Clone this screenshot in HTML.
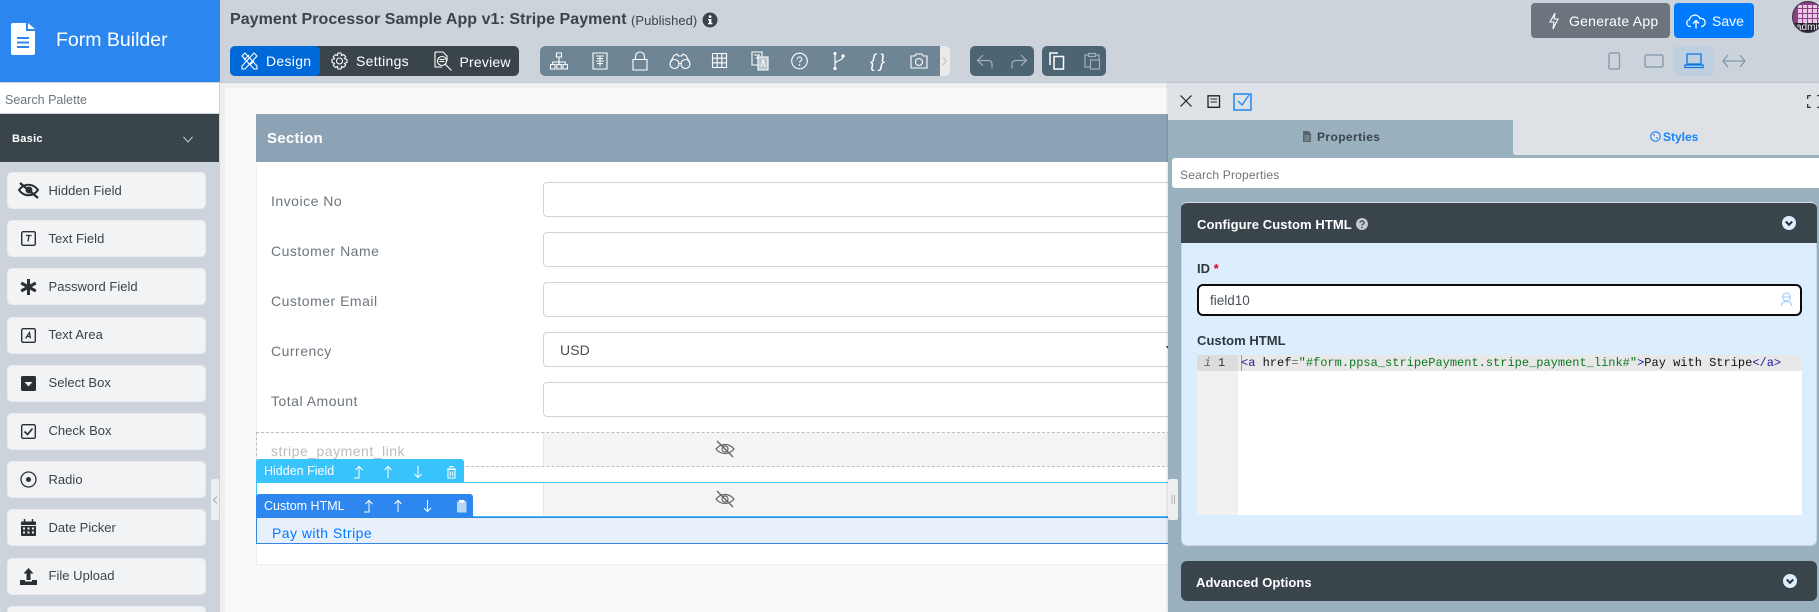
<!DOCTYPE html>
<html lang="en"><head><meta charset="utf-8"><title>Form Builder</title>
<style>
html,body{margin:0;padding:0;width:1819px;height:612px;overflow:hidden;background:#f8f9fb;font-family:"Liberation Sans",sans-serif}
div,span,svg{position:absolute;box-sizing:border-box}
#root{left:0;top:0;width:1819px;height:612px;overflow:hidden}
.t{white-space:nowrap;line-height:20px;height:20px}
svg{overflow:visible;fill:none}
.it{left:7px;width:199px;height:37px;background:#f2f3f5;border:1px solid #e9ebee;border-radius:5px}
.il{left:48.500px;font-size:13px;color:#3a444b;letter-spacing:.02px}
.lb{left:271px;font-size:14px;color:#6c757d;letter-spacing:.5px}
.inp{left:543px;width:640px;height:35px;background:#fff;border:1px solid #ced4da;border-radius:4px}
.w{stroke:#fff;stroke-width:1.1}
.c{font-family:"Liberation Mono",monospace;font-size:12px;line-height:16px;height:16px;white-space:pre}
</style></head><body><div id="root">

<!-- top bar -->
<div style="left:0;top:0;width:1819px;height:83px;background:#ccd3db;border-bottom:1px solid #c4cbd2"></div>
<div style="left:0;top:0;width:220px;height:82px;background:#2b86ef"></div>
<svg style="left:11px;top:23px" width="24" height="32" viewBox="0 0 24 32"><path d="M2 0H15V8H24V30a2 2 0 0 1-2 2H2a2 2 0 0 1-2-2V2a2 2 0 0 1 2-2Z" fill="#fff"/><path d="M17 0l7 6h-7Z" fill="#fff"/><path d="M6 15h12M6 19.500h12M6 24h12" stroke="#2b86ef" stroke-width="2"/></svg>
<div class="t" style="left:56px;top:30px;font-size:19.500px;color:#fff;line-height:20px">Form Builder</div>

<div class="t" style="left:230px;top:10px;font-size:16px;font-weight:bold;color:#3a444b;letter-spacing:.05px">Payment Processor Sample App v1: Stripe Payment</div>
<div class="t" style="left:631px;top:11px;font-size:13px;color:#3a444b;letter-spacing:.05px">(Published)</div>
<svg style="left:702px;top:12px" width="16" height="16" viewBox="0 0 16 16"><circle cx="8" cy="8" r="7.500" fill="#3a444b"/><rect x="7" y="7" width="2.400" height="5" fill="#fff"/><rect x="6" y="11" width="4.400" height="1.300" fill="#fff"/><rect x="6" y="7" width="3" height="1.200" fill="#fff"/><circle cx="8.100" cy="4.600" r="1.400" fill="#fff"/></svg>

<!-- design tabs -->
<div style="left:230px;top:46px;width:289px;height:30px;background:#3a444b;border-radius:5px"></div>
<div style="left:230px;top:46px;width:90px;height:30px;background:#0069d9;border-radius:5px"></div>
<svg style="left:241px;top:52px" width="17" height="18" viewBox="0 0 17 18"><path class="w" d="M1 4l3-3 12 13v3h-3ZM13 1l3 3L4 17H1v-3ZM3 8L8 3M9 13l4-4"/></svg>
<div class="t" style="left:266px;top:51px;font-size:14px;color:#fff;letter-spacing:.3px">Design</div>
<svg style="left:331px;top:52px" width="17" height="18" viewBox="0 0 17 18"><circle class="w" cx="8.500" cy="9" r="3"/><path class="w" d="M7 1h3l.5 2.500 2-1 2.200 2.200-1.200 2 2.500.800v3l-2.500.800 1.200 2-2.200 2.200-2-1L10 17H7l-.5-2.500-2 1-2.200-2.200 1.200-2L1 10.500v-3l2.500-.800-1.200-2 2.200-2.200 2 1Z"/></svg>
<div class="t" style="left:356px;top:51px;font-size:14px;color:#fff;letter-spacing:.3px">Settings</div>
<svg style="left:434px;top:51px" width="20" height="21" viewBox="0 0 20 21"><path class="w" d="M1 1h8l4 4v5M1 1v15h7"/><circle class="w" cx="8" cy="10" r="4.500"/><path class="w" d="M5.500 8.500h5M5.500 10.500h5M11.500 13.500l6 6"/></svg>
<div class="t" style="left:459.500px;top:52px;font-size:14px;color:#fff;letter-spacing:.2px">Preview</div>

<!-- tool group -->
<div style="left:540px;top:46px;width:410px;height:30px;background:#eaeaea;border-radius:5px"></div>
<div style="left:540px;top:46px;width:400px;height:30px;background:#6e8596;border-radius:5px 0 0 5px"></div>
<svg style="left:941px;top:56px" width="8" height="10" viewBox="0 0 8 10"><path d="M2 1l3 4-3 4" stroke="#bbb"/></svg>
<svg style="left:550px;top:52px" width="18" height="18" viewBox="0 0 18 18"><path class="w" d="M6.500 1h5v4h-5ZM.500 12.500h4.500v4.500H.5ZM6.800 12.500h4.500v4.500H6.800ZM13 12.500h4.500v4.500H13ZM9 5v5M2.700 12.500V10h12.500v2.500M9 10v2.500"/></svg>
<svg style="left:592px;top:52px" width="16" height="18" viewBox="0 0 16 18"><path class="w" d="M1 1h14v16H1Z"/><path d="M4 4h8M5 6.500h6M4 9h8M5 11.500h6M8 3.500v11" stroke="#fff"/></svg>
<svg style="left:632px;top:51px" width="16" height="20" viewBox="0 0 16 20"><path class="w" d="M1 8.500h14V19H1ZM3.500 8.500V5.500a4.500 4.500 0 0 1 9 0v3"/></svg>
<svg style="left:669px;top:53px" width="22" height="17" viewBox="0 0 22 17"><circle class="w" cx="5.500" cy="11" r="4.500"/><circle class="w" cx="16.500" cy="11" r="4.500"/><path class="w" d="M1.500 9L5 2.500 8 1l1 2M20.500 9L17 2.500 14 1l-1 2M9.500 10.500h3M9 3h4"/></svg>
<svg style="left:712px;top:53px" width="15" height="15" viewBox="0 0 15 15"><path class="w" d="M.5.500h14v14H.5ZM5.200.5v14M9.800.5v14M.5 5.200h14M.5 9.800h14"/></svg>
<svg style="left:751px;top:51px" width="18" height="20" viewBox="0 0 18 20"><path class="w" d="M1 1h10v13H1Z" fill="#6e8596"/><path class="w" d="M7 6h10v13H7Z" fill="#b9c6cf"/><path d="M3 4h6M5 8l3-4" stroke="#fff"/><path d="M10 16l2-7 2 7" stroke="#fff"/></svg>
<svg style="left:791px;top:52px" width="17" height="18" viewBox="0 0 17 18"><circle class="w" cx="8.500" cy="9" r="7.800"/><path d="M6.300 7.300c0-3 4.500-3 4.500-.1 0 1.700-2.300 1.800-2.300 3.500" stroke="#fff"/><circle cx="8.500" cy="13" r=".9" fill="#fff"/></svg>
<svg style="left:832px;top:51px" width="14" height="20" viewBox="0 0 14 20"><path class="w" d="M3 3.500v13M11 6c0 4-8 3-8 7"/><circle cx="3" cy="2.500" r="1.600" fill="#fff"/><circle cx="3" cy="17.500" r="1.600" fill="#fff"/><circle cx="11" cy="5" r="1.600" fill="#fff"/></svg>
<div class="t" style="left:870px;top:50px;font-size:18px;line-height:22px;height:22px;color:#fff;font-style:italic;letter-spacing:3px">{}</div>
<svg style="left:910px;top:53px" width="18" height="16" viewBox="0 0 18 16"><path class="w" d="M1 3h4l1-2h6l1 2h4v12H1Z"/><circle class="w" cx="9" cy="9" r="3.500" stroke-width="1.500"/></svg>

<!-- undo/copy -->
<div style="left:970px;top:46px;width:64px;height:30px;background:#4c6474;border-radius:5px"></div>
<div style="left:1042px;top:46px;width:64px;height:30px;background:#4c6474;border-radius:5px"></div>
<svg style="left:976px;top:54px" width="18" height="15" viewBox="0 0 18 15"><path d="M7 1L1.500 6.500 7 11.500M1.500 6.500H12c3 0 4 2 4 4v4" stroke="#9fb0bc" stroke-width="1.200"/></svg>
<svg style="left:1010px;top:54px" width="18" height="15" viewBox="0 0 18 15"><path d="M11 1l5.500 5.500L11 11.500M16.500 6.500H6c-3 0-4 2-4 4v4" stroke="#9fb0bc" stroke-width="1.200"/></svg>
<svg style="left:1049px;top:52px" width="16" height="18" viewBox="0 0 16 18"><path d="M1 13V1h8M5 4.500h9.500V17H5Z" stroke="#fff" stroke-width="1.500"/></svg>
<svg style="left:1084px;top:52px" width="16" height="18" viewBox="0 0 16 18"><path d="M5 3H1v12h5M11 3h4v5M4.500 1.500h7v3h-7ZM6.500 8h9v9h-9Z" stroke="#9fb0bc" stroke-width="1.200"/></svg>

<!-- right top -->
<div style="left:1531px;top:3px;width:139px;height:35px;background:#6c757d;border-radius:4px"></div>
<svg style="left:1548px;top:12px" width="12" height="18" viewBox="0 0 12 18"><path d="M7 1L2 10h4l-1 7 5-10H6Z" stroke="#fff" stroke-width="1.100"/></svg>
<div class="t" style="left:1569px;top:11px;font-size:14px;color:#fff;letter-spacing:.25px">Generate App</div>
<div style="left:1674px;top:3px;width:80px;height:35px;background:#007bff;border-radius:4px"></div>
<svg style="left:1686px;top:14px" width="20" height="15" viewBox="0 0 20 15"><path d="M5 12.500H4A3.500 3.500 0 0 1 3.500 5.600 5.500 5.500 0 0 1 14 4.500a4 4 0 0 1 2 8h-1M10 14.500V7M7 9.500L10 6.500 13 9.500" stroke="#fff" stroke-width="1.300"/></svg>
<div class="t" style="left:1712px;top:11px;font-size:14px;color:#fff">Save</div>
<div style="left:1792px;top:1px;width:32px;height:32px;border-radius:50%;background:#8a3f85;overflow:hidden;border:1px solid #3a3340">
  <div style="left:5px;top:3px;width:24px;height:18px;background:repeating-linear-gradient(90deg,transparent 0 4px,#8a3f85 4px 5px),repeating-linear-gradient(0deg,#e9c9e6 0 4px,#8a3f85 4px 5px)"></div>
  <div style="left:0;top:21px;width:32px;height:11px;background:#2a2230"></div>
  <div class="t" style="left:3px;top:16px;font-size:10px;color:#eee">admin</div>
</div>
<div style="left:1674px;top:46px;width:40px;height:30px;background:#c0cfdf;border-radius:3px"></div>
<svg style="left:1607px;top:52px" width="14" height="18" viewBox="0 0 14 18"><rect x="2" y="1" width="10.500" height="16" rx="1.500" stroke="#7f97a8" stroke-width="1.300"/></svg>
<svg style="left:1644px;top:53px" width="20" height="16" viewBox="0 0 20 16"><rect x="1" y="2" width="18" height="12" rx="1.500" stroke="#7f97a8" stroke-width="1.300"/></svg>
<svg style="left:1684px;top:53px" width="20" height="16" viewBox="0 0 20 16"><path d="M3 1h14v10H3ZM1 12h18v2.500H1Z" stroke="#0a76e8" stroke-width="1.300"/></svg>
<svg style="left:1722px;top:54px" width="24" height="14" viewBox="0 0 24 14"><path d="M6 1L1 7l5 6M18 1l5 6-5 6M1 7h22" stroke="#7f97a8" stroke-width="1.200"/></svg>

<!-- sidebar -->
<div style="left:0;top:82px;width:220px;height:530px;background:#ccd3db"></div>
<div style="left:0;top:83px;width:219px;height:30px;background:#fff"></div>
<div class="t" style="left:5px;top:90px;font-size:12.500px;color:#6c757d">Search Palette</div>
<div style="left:0;top:114px;width:219px;height:48px;background:#3a444b"></div>
<div class="t" style="left:12px;top:129px;font-size:11px;font-weight:bold;color:#fff;letter-spacing:.3px">Basic</div>
<svg style="left:183px;top:136px" width="10" height="7" viewBox="0 0 10 7"><path d="M.5 1L5 6 9.500 1" stroke="#c5ccd2"/></svg>

<div class="it" style="top:172px"></div><div class="t il" style="top:181px">Hidden Field</div>
<svg style="left:18px;top:182px" width="22" height="17" viewBox="0 0 22 17"><path d="M1 8c5-7 14-7 19 0-5 7-14 7-19 0Z" stroke="#2b2f33" stroke-width="2"/><circle cx="11" cy="8" r="3.500" fill="#2b2f33"/><path d="M2 1l18 15" stroke="#2b2f33" stroke-width="2.400"/></svg>
<div class="it" style="top:220px"></div><div class="t il" style="top:229px">Text Field</div>
<svg style="left:21px;top:231px" width="15" height="15" viewBox="0 0 15 15"><rect x=".7" y=".7" width="13.600" height="13.600" rx="1.500" stroke="#2b2f33" stroke-width="1.400"/><path d="M5 4.500h5.500M8 4.500l-1 6" stroke="#2b2f33" stroke-width="1.300"/></svg>
<div class="it" style="top:268px"></div><div class="t il" style="top:277px">Password Field</div>
<svg style="left:20px;top:278px" width="17" height="18" viewBox="0 0 17 18"><path d="M8.500 1v16M1.200 5l14.600 8M15.800 5L1.200 13" stroke="#2b2f33" stroke-width="3"/></svg>
<div class="it" style="top:317px"></div><div class="t il" style="top:325px">Text Area</div>
<svg style="left:21px;top:328px" width="15" height="15" viewBox="0 0 15 15"><rect x=".7" y=".7" width="13.600" height="13.600" rx="1.500" stroke="#2b2f33" stroke-width="1.400"/><path d="M4.500 10.500L8.500 4.500 9.500 10.500M6 8.500h3.500" stroke="#2b2f33" stroke-width="1.200"/></svg>
<div class="it" style="top:365px"></div><div class="t il" style="top:373px">Select Box</div>
<svg style="left:21px;top:376px" width="15" height="15" viewBox="0 0 15 15"><rect width="15" height="15" rx="1.500" fill="#2b2f33"/><path d="M3.500 6h8l-4 4.500Z" fill="#f2f3f5"/></svg>
<div class="it" style="top:413px"></div><div class="t il" style="top:421px">Check Box</div>
<svg style="left:21px;top:424px" width="15" height="15" viewBox="0 0 15 15"><rect x=".7" y=".7" width="13.600" height="13.600" rx="1.500" stroke="#2b2f33" stroke-width="1.400"/><path d="M3.500 7.500l3 3 5-6" stroke="#2b2f33" stroke-width="1.700"/></svg>
<div class="it" style="top:461px"></div><div class="t il" style="top:470px">Radio</div>
<svg style="left:20px;top:471px" width="17" height="17" viewBox="0 0 17 17"><circle cx="8.500" cy="8.500" r="7.500" stroke="#2b2f33" stroke-width="1.300"/><circle cx="8.500" cy="8.500" r="2.500" fill="#2b2f33"/></svg>
<div class="it" style="top:509px"></div><div class="t il" style="top:518px">Date Picker</div>
<svg style="left:21px;top:519px" width="15" height="17" viewBox="0 0 15 17"><path d="M0 3.500a1 1 0 0 1 1-1h13a1 1 0 0 1 1 1V6H0ZM0 7h15v9a1 1 0 0 1-1 1H1a1 1 0 0 1-1-1Z" fill="#2b2f33"/><path d="M3.500 0v3M11.500 0v3" stroke="#2b2f33" stroke-width="1.500"/><path d="M2 9.500h2M6.500 9.500h2M11 9.500h2M2 13.500h2M6.500 13.500h2M11 13.500h2" stroke="#f2f3f5" stroke-width="2"/></svg>
<div class="it" style="top:558px"></div><div class="t il" style="top:566px">File Upload</div>
<svg style="left:20px;top:568px" width="17" height="17" viewBox="0 0 17 17"><path d="M8.500 0l5 5.500h-3V12h-4V5.500h-3Z" fill="#2b2f33"/><path d="M0 12h5v1.500h7V12h5v5H0Z" fill="#2b2f33"/></svg>
<div class="it" style="top:606px;height:6px;border-bottom:0;border-radius:5px 5px 0 0"></div>

<div style="left:211px;top:479px;width:8px;height:41px;background:#eceeef;border-radius:2px"></div>
<svg style="left:212px;top:496px" width="6" height="8" viewBox="0 0 6 8"><path d="M5 .5L1.500 4 5 7.500" stroke="#aaa"/></svg>

<!-- main -->
<div style="left:220px;top:83px;width:950px;height:529px;background:#efefef"></div>
<div style="left:225px;top:88px;width:945px;height:524px;background:#f8f9fb"></div>
<div style="left:256px;top:114px;width:914px;height:451px;background:#fff;border:1px solid #eef0f2"></div>
<div style="left:256px;top:114px;width:914px;height:48px;background:#8ca3b6"></div>
<div class="t" style="left:267px;top:129px;font-size:15px;font-weight:bold;color:#fff;letter-spacing:.25px">Section</div>

<div class="t lb" style="top:191px">Invoice No</div><div class="inp" style="top:182px"></div>
<div class="t lb" style="top:241px">Customer Name</div><div class="inp" style="top:232px"></div>
<div class="t lb" style="top:291px">Customer Email</div><div class="inp" style="top:282px"></div>
<div class="t lb" style="top:341px">Currency</div><div class="inp" style="top:332px"></div>
<div class="t" style="left:560px;top:340px;font-size:14px;color:#495057;letter-spacing:.1px">USD</div>
<div class="t lb" style="top:391px">Total Amount</div><div class="inp" style="top:382px"></div>

<div style="left:256px;top:432px;width:914px;height:35px;border:1px dashed #bdbdbd;border-right:0"></div>
<div class="t lb" style="top:441px;color:#bcbcbc">stripe_payment_link</div>
<div style="left:543px;top:433px;width:627px;height:33px;background:#f4f4f4;border-left:1px solid #e8e8e8"></div>
<svg style="left:715px;top:440px" width="20" height="18" viewBox="0 0 20 18"><path d="M1 9c5-6 13-6 18 0-5 6-13 6-18 0Z" stroke="#666" stroke-width="1.200"/><circle cx="10" cy="9" r="3" stroke="#666" stroke-width="1.200"/><path d="M2 1l16 16" stroke="#666" stroke-width="1.300"/></svg>

<div style="left:256px;top:482px;width:914px;height:35px;background:#fff;border:1px solid #38c3fd;border-right:0;border-width:1px 0 1px 1px"></div>
<div style="left:543px;top:483px;width:627px;height:33px;background:#f4f4f4;border-left:1px solid #e8e8e8"></div>
<svg style="left:715px;top:490px" width="20" height="18" viewBox="0 0 20 18"><path d="M1 9c5-6 13-6 18 0-5 6-13 6-18 0Z" stroke="#666" stroke-width="1.200"/><circle cx="10" cy="9" r="3" stroke="#666" stroke-width="1.200"/><path d="M2 1l16 16" stroke="#666" stroke-width="1.300"/></svg>
<div style="left:256px;top:517px;width:914px;height:27px;background:#e8f0fc;border:1px solid #3584e4;border-right:0"></div>
<div class="t" style="left:272px;top:523px;font-size:14px;color:#007bff;letter-spacing:.45px">Pay with Stripe</div>

<div style="left:256px;top:459px;width:208px;height:23px;background:#38c3fd;border-radius:3px 3px 0 0"></div>
<div class="t" style="left:264px;top:461px;font-size:12.500px;color:#fff">Hidden Field</div>
<svg style="left:353px;top:465px" width="104" height="14" viewBox="0 0 104 14"><path d="M1 13h5V2M2.500 5L6 1.500 9.500 5M35 13V2M31.500 5L35 1.500 38.500 5M65 1v11M61.500 9L65 12.500 68.500 9M94 4h9M97 3V1.500h3V3M95 4.500h7V13h-7ZM97.300 6.500V11M99.700 6.500V11" stroke="#fff"/></svg>
<div style="left:256px;top:494px;width:217px;height:23px;background:#2e86ef;border-radius:3px 3px 0 0"></div>
<div class="t" style="left:264px;top:496px;font-size:12.500px;color:#fff">Custom HTML</div>
<svg style="left:363px;top:499px" width="104" height="14" viewBox="0 0 104 14"><path d="M1 13h5V2M2.500 5L6 1.500 9.500 5M35 13V2M31.500 5L35 1.500 38.500 5M64.500 1v11M61 9l3.500 3.500L68 9" stroke="#fff"/><path d="M94 2.500h9.500V13.500H94Z" fill="#b9d5f8"/><path d="M96 1h5.500v2.500H96Z" fill="#fff"/></svg>

<div style="left:1166px;top:346px;width:0;height:0;border-left:2px solid transparent;border-right:2px solid transparent;border-top:3px solid #333"></div>

<!-- panel -->
<div style="left:1168px;top:83px;width:651px;height:529px;background:#99b0bf;box-shadow:-1px 0 2px rgba(0,0,0,.12)"></div>
<div style="left:1168px;top:83px;width:651px;height:37px;background:#dee2e7"></div>
<svg style="left:1180px;top:95px" width="12" height="12" viewBox="0 0 12 12"><path d="M.5.500l11 11M11.500.5l-11 11" stroke="#222" stroke-width="1.200"/></svg>
<svg style="left:1207px;top:95px" width="14" height="13" viewBox="0 0 14 13"><path d="M1 .8h11.500v11.500H1Z" stroke="#222" stroke-width="1.300"/><path d="M3.500 4h6.500M3.500 7h6.500" stroke="#222"/></svg>
<svg style="left:1233px;top:93px" width="19" height="18" viewBox="0 0 19 18"><path d="M1 1h17v16H1Z" stroke="#1e88f0" stroke-width="1.500"/><path d="M5 8l4 4 7-10" stroke="#1e88f0" stroke-width="1.300"/></svg>
<svg style="left:1807px;top:95px" width="14" height="13" viewBox="0 0 14 13"><path d="M.7 4V.7H4M10 .7h3.300V4M.7 9v3.300H4M10 12.300h3.300V9" stroke="#222" stroke-width="1.200"/></svg>
<div style="left:1513px;top:120px;width:306px;height:35px;background:#dee2e7;border-radius:0 0 0 3px"></div>
<div style="left:1169px;top:120px;width:344px;height:38px;background:#99b0bf;border-radius:4px 4px 0 0"></div>
<svg style="left:1303px;top:131px" width="8" height="11" viewBox="0 0 8 11"><path d="M0 0h5.500L8 2.500V11H0Z" fill="#58656f"/><path d="M1.500 5h5M1.500 7h5M1.500 9h5" stroke="#99b0bf" stroke-width=".8"/></svg>
<div class="t" style="left:1317px;top:127px;font-size:12px;font-weight:bold;color:#3a444b;letter-spacing:.4px">Properties</div>
<svg style="left:1650px;top:131px" width="11" height="11" viewBox="0 0 11 11"><circle cx="5.500" cy="5.500" r="4.800" stroke="#0a7bf0" stroke-width="1"/><path d="M3 4h2M6 7h2" stroke="#0a7bf0"/></svg>
<div class="t" style="left:1663px;top:127px;font-size:12px;font-weight:bold;color:#1a83f5">Styles</div>
<div style="left:1172px;top:158px;width:647px;height:30px;background:#fff;border-radius:3px 0 0 3px"></div>
<div class="t" style="left:1180px;top:165px;font-size:12px;color:#6c757d;letter-spacing:.2px">Search Properties</div>

<div style="left:1181px;top:202px;width:636px;height:344px;background:#dceefd;border:1px solid #c8d4de;border-radius:6px"></div>
<div style="left:1181px;top:202px;width:636px;height:41px;background:#3a444b;border-radius:6px 6px 0 0;border-top:1px solid #d5dde3"></div>
<div class="t" style="left:1197px;top:215px;font-size:13px;font-weight:bold;color:#fff;letter-spacing:.08px">Configure Custom HTML</div>
<svg style="left:1356px;top:218px" width="12" height="12" viewBox="0 0 12 12"><circle cx="6" cy="6" r="6" fill="#c3c9ce"/><path d="M4 4.700c0-2.300 4-2.300 4 0 0 1.500-2 1.400-2 2.800" stroke="#3a444b" stroke-width="1.200"/><circle cx="6" cy="9.500" r=".8" fill="#3a444b"/></svg>
<svg style="left:1782px;top:216px" width="14" height="14" viewBox="0 0 14 14"><circle cx="7" cy="7" r="7" fill="#dceefd"/><path d="M3.800 5.500L7 8.800l3.200-3.300" stroke="#2b3238" stroke-width="2"/></svg>

<div class="t" style="left:1197px;top:259px;font-size:13px;font-weight:bold;color:#2f373d">ID <span style="position:static;color:#e0001a">*</span></div>
<div style="left:1197px;top:284px;width:605px;height:32px;background:#fff;border:2px solid #0c0c0c;border-radius:6px"></div>
<div class="t" style="left:1210px;top:291px;font-size:13.500px;color:#495057">field10</div>
<svg style="left:1780px;top:292px" width="13" height="15" viewBox="0 0 13 15"><circle cx="6.500" cy="5" r="4" stroke="#a9d0f5" stroke-width="1.200"/><path d="M2 5h9M1.500 14c0-3 2-4.500 5-4.500s5 1.500 5 4.500" stroke="#a9d0f5" stroke-width="1.200"/></svg>
<div class="t" style="left:1197px;top:331px;font-size:13px;font-weight:bold;color:#2f373d;letter-spacing:.05px">Custom HTML</div>

<div style="left:1197px;top:355px;width:605px;height:160px;background:#fff"></div>
<div style="left:1197px;top:355px;width:41px;height:160px;background:#f0f0f0"></div>
<div style="left:1238px;top:355px;width:564px;height:16px;background:#e8e8e8"></div>
<div style="left:1197px;top:355px;width:41px;height:16px;background:#dcdcdc"></div>
<div style="left:1241px;top:355px;width:1px;height:16px;background:#999"></div>
<div class="c" style="left:1204px;top:355px;color:#666;font-style:italic">i</div>
<div class="c" style="left:1218px;top:355px;color:#333">1</div>
<div class="c" style="left:1241px;top:355px;color:#111"><span style="position:static;color:#1a1aa6">&lt;a</span> href<span style="position:static;color:#777">=</span><span style="position:static;color:#0b7a1f">"#form.ppsa_stripePayment.stripe_payment_link#"</span><span style="position:static;color:#1a1aa6">&gt;</span>Pay with Stripe<span style="position:static;color:#1a1aa6">&lt;/a&gt;</span></div>

<div style="left:1181px;top:561px;width:636px;height:40px;background:#3a444b;border-radius:6px"></div>
<div class="t" style="left:1196px;top:573px;font-size:13px;font-weight:bold;color:#fff;letter-spacing:.05px">Advanced Options</div>
<svg style="left:1783px;top:574px" width="14" height="14" viewBox="0 0 14 14"><circle cx="7" cy="7" r="7" fill="#dceefd"/><path d="M3.800 5.500L7 8.800l3.200-3.300" stroke="#2b3238" stroke-width="2"/></svg>

<div style="left:1168px;top:479px;width:10px;height:41px;background:#eceeef;border-radius:2px"></div>
<svg style="left:1171px;top:495px" width="5" height="9" viewBox="0 0 5 9"><path d="M1 0v9M3.500 0v9" stroke="#b5b5b5"/></svg>
</div></body></html>
